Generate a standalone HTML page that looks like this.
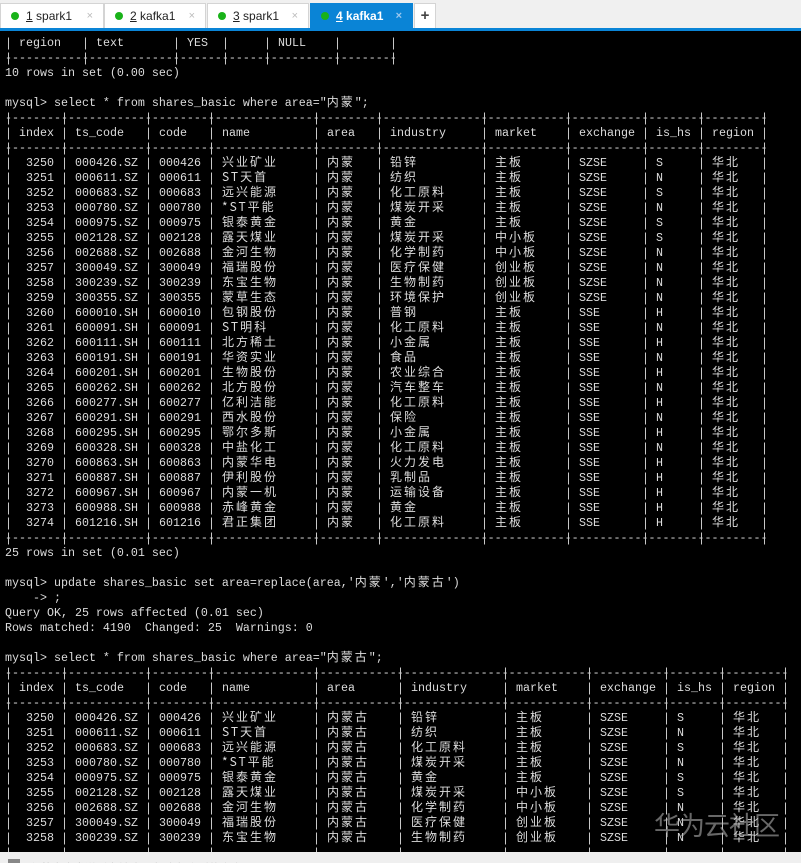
<!DOCTYPE html>
<html><head><meta charset="utf-8"><style>
*{margin:0;padding:0;box-sizing:border-box}
html,body{width:801px;height:863px;overflow:hidden}
body{background:#000;position:relative;font-family:"Liberation Mono","Noto Sans CJK SC",monospace;font-size:11.67px;color:#dcdcdc}
#tabs{position:absolute;left:0;top:0;width:801px;height:31px;background:#f0f0f0;border-bottom:3px solid #0a84d6}
.tab{position:absolute;top:3px;height:25px;background:#fff;border:1px solid #d4d4d4;border-bottom:none;font-family:"Liberation Sans",sans-serif;font-size:12px;color:#222;line-height:24px}
.tab .d{position:absolute;left:10px;top:8px;width:8px;height:8px;border-radius:50%;background:#19b219}
.tab .n{position:absolute;left:25px;top:0}
.tab .n u{text-decoration:underline}
.tab .x{position:absolute;right:10px;top:0;color:#bbb;font-size:11px}
.tab.a{background:#0a84d6;border-color:#0a84d6;color:#fff;font-weight:bold}
.tab.a .x{color:#9cc8ee}
#plus{position:absolute;left:414px;top:3px;width:22px;height:25px;background:#fff;border:1px solid #d4d4d4;border-bottom:none;text-align:center;font:bold 15px/23px "Liberation Sans",sans-serif;color:#444}
#term{position:absolute;left:0;top:35.5px;width:801px}
.l{height:15px;line-height:15px;position:relative;white-space:pre;padding-left:5px}
.l span{position:absolute;top:0}
i.z{font-family:"Noto Sans CJK SC",sans-serif;font-size:12px;letter-spacing:2px;font-style:normal;line-height:12px}
.l span.z{font-family:"Noto Sans CJK SC",sans-serif;font-size:12px;letter-spacing:2px;top:-2px}
.r .a{left:26px}.r .b{left:75px}.r .c{left:159px}.r .d{left:222px}.r .e{left:327px}
.hd .a{left:19px}
.p1 .f{left:390px}.p1 .g{left:495px}.p1 .h{left:579px}.p1 .i{left:656px}.p1 .j{left:712px}
.p2 .f{left:411px}.p2 .g{left:516px}.p2 .h{left:600px}.p2 .i{left:677px}.p2 .j{left:733px}
.v{position:absolute;width:1px;background:repeating-linear-gradient(to bottom,transparent 0,transparent 1.5px,#c8c8c8 1.5px,#c8c8c8 13.5px,transparent 13.5px,transparent 15px)}
.t1 .v{top:110.5px;height:435px}
.t2 .v{top:665.5px;height:187px}
.t0 .v{top:35.5px;height:30px}
#bot{position:absolute;left:0;top:852px;width:801px;height:11px;background:#efefef;overflow:hidden}
#bot .s{position:absolute;left:8px;top:7px;width:12px;height:6px;background:#888}
#bot .t{position:absolute;left:30px;top:8px;font:11px "Liberation Sans","Noto Sans CJK SC",sans-serif;color:#999;white-space:nowrap}
#wm{position:absolute;left:654px;top:806px;font:26px "Noto Sans CJK SC",sans-serif;color:rgba(190,190,190,0.55);letter-spacing:-1px}
</style></head><body>
<div id="tabs">
<div class="tab" style="left:0;width:104px"><span class="d"></span><span class="n"><u>1</u> spark1</span><span class="x">×</span></div>
<div class="tab" style="left:104px;width:102px"><span class="d"></span><span class="n"><u>2</u> kafka1</span><span class="x">×</span></div>
<div class="tab" style="left:207px;width:102px"><span class="d"></span><span class="n"><u>3</u> spark1</span><span class="x">×</span></div>
<div class="tab a" style="left:310px;width:103px"><span class="d"></span><span class="n"><u>4</u> kafka1</span><span class="x">×</span></div>
<div id="plus">+</div>
</div>
<div id="term">
<div class="l"><span style="left:19px">region</span><span style="left:96px">text</span><span style="left:187px">YES</span><span style="left:278px">NULL</span></div>
<div class="l">--------------------------------------------------------</div>
<div class="l">10 rows in set (0.00 sec)</div>
<div class="l"> </div>
<div class="l">mysql&gt; select * from shares_basic where area="<i class="z">内蒙</i>";</div>
<div class="l">-------------------------------------------------------------------------------------------------------------</div>
<div class="l r p1 hd"><span class="a">index</span><span class="b">ts_code</span><span class="c">code</span><span class="d">name</span><span class="e">area</span><span class="f">industry</span><span class="g">market</span><span class="h">exchange</span><span class="i">is_hs</span><span class="j">region</span></div>
<div class="l">-------------------------------------------------------------------------------------------------------------</div>
<div class="l r p1"><span class="a">3250</span><span class="b">000426.SZ</span><span class="c">000426</span><span class="d z">兴业矿业</span><span class="e z">内蒙</span><span class="f z">铅锌</span><span class="g z">主板</span><span class="h">SZSE</span><span class="i">S</span><span class="j z">华北</span></div>
<div class="l r p1"><span class="a">3251</span><span class="b">000611.SZ</span><span class="c">000611</span><span class="d z">ST天首</span><span class="e z">内蒙</span><span class="f z">纺织</span><span class="g z">主板</span><span class="h">SZSE</span><span class="i">N</span><span class="j z">华北</span></div>
<div class="l r p1"><span class="a">3252</span><span class="b">000683.SZ</span><span class="c">000683</span><span class="d z">远兴能源</span><span class="e z">内蒙</span><span class="f z">化工原料</span><span class="g z">主板</span><span class="h">SZSE</span><span class="i">S</span><span class="j z">华北</span></div>
<div class="l r p1"><span class="a">3253</span><span class="b">000780.SZ</span><span class="c">000780</span><span class="d z">*ST平能</span><span class="e z">内蒙</span><span class="f z">煤炭开采</span><span class="g z">主板</span><span class="h">SZSE</span><span class="i">N</span><span class="j z">华北</span></div>
<div class="l r p1"><span class="a">3254</span><span class="b">000975.SZ</span><span class="c">000975</span><span class="d z">银泰黄金</span><span class="e z">内蒙</span><span class="f z">黄金</span><span class="g z">主板</span><span class="h">SZSE</span><span class="i">S</span><span class="j z">华北</span></div>
<div class="l r p1"><span class="a">3255</span><span class="b">002128.SZ</span><span class="c">002128</span><span class="d z">露天煤业</span><span class="e z">内蒙</span><span class="f z">煤炭开采</span><span class="g z">中小板</span><span class="h">SZSE</span><span class="i">S</span><span class="j z">华北</span></div>
<div class="l r p1"><span class="a">3256</span><span class="b">002688.SZ</span><span class="c">002688</span><span class="d z">金河生物</span><span class="e z">内蒙</span><span class="f z">化学制药</span><span class="g z">中小板</span><span class="h">SZSE</span><span class="i">N</span><span class="j z">华北</span></div>
<div class="l r p1"><span class="a">3257</span><span class="b">300049.SZ</span><span class="c">300049</span><span class="d z">福瑞股份</span><span class="e z">内蒙</span><span class="f z">医疗保健</span><span class="g z">创业板</span><span class="h">SZSE</span><span class="i">N</span><span class="j z">华北</span></div>
<div class="l r p1"><span class="a">3258</span><span class="b">300239.SZ</span><span class="c">300239</span><span class="d z">东宝生物</span><span class="e z">内蒙</span><span class="f z">生物制药</span><span class="g z">创业板</span><span class="h">SZSE</span><span class="i">N</span><span class="j z">华北</span></div>
<div class="l r p1"><span class="a">3259</span><span class="b">300355.SZ</span><span class="c">300355</span><span class="d z">蒙草生态</span><span class="e z">内蒙</span><span class="f z">环境保护</span><span class="g z">创业板</span><span class="h">SZSE</span><span class="i">N</span><span class="j z">华北</span></div>
<div class="l r p1"><span class="a">3260</span><span class="b">600010.SH</span><span class="c">600010</span><span class="d z">包钢股份</span><span class="e z">内蒙</span><span class="f z">普钢</span><span class="g z">主板</span><span class="h">SSE</span><span class="i">H</span><span class="j z">华北</span></div>
<div class="l r p1"><span class="a">3261</span><span class="b">600091.SH</span><span class="c">600091</span><span class="d z">ST明科</span><span class="e z">内蒙</span><span class="f z">化工原料</span><span class="g z">主板</span><span class="h">SSE</span><span class="i">N</span><span class="j z">华北</span></div>
<div class="l r p1"><span class="a">3262</span><span class="b">600111.SH</span><span class="c">600111</span><span class="d z">北方稀土</span><span class="e z">内蒙</span><span class="f z">小金属</span><span class="g z">主板</span><span class="h">SSE</span><span class="i">H</span><span class="j z">华北</span></div>
<div class="l r p1"><span class="a">3263</span><span class="b">600191.SH</span><span class="c">600191</span><span class="d z">华资实业</span><span class="e z">内蒙</span><span class="f z">食品</span><span class="g z">主板</span><span class="h">SSE</span><span class="i">N</span><span class="j z">华北</span></div>
<div class="l r p1"><span class="a">3264</span><span class="b">600201.SH</span><span class="c">600201</span><span class="d z">生物股份</span><span class="e z">内蒙</span><span class="f z">农业综合</span><span class="g z">主板</span><span class="h">SSE</span><span class="i">H</span><span class="j z">华北</span></div>
<div class="l r p1"><span class="a">3265</span><span class="b">600262.SH</span><span class="c">600262</span><span class="d z">北方股份</span><span class="e z">内蒙</span><span class="f z">汽车整车</span><span class="g z">主板</span><span class="h">SSE</span><span class="i">N</span><span class="j z">华北</span></div>
<div class="l r p1"><span class="a">3266</span><span class="b">600277.SH</span><span class="c">600277</span><span class="d z">亿利洁能</span><span class="e z">内蒙</span><span class="f z">化工原料</span><span class="g z">主板</span><span class="h">SSE</span><span class="i">H</span><span class="j z">华北</span></div>
<div class="l r p1"><span class="a">3267</span><span class="b">600291.SH</span><span class="c">600291</span><span class="d z">西水股份</span><span class="e z">内蒙</span><span class="f z">保险</span><span class="g z">主板</span><span class="h">SSE</span><span class="i">N</span><span class="j z">华北</span></div>
<div class="l r p1"><span class="a">3268</span><span class="b">600295.SH</span><span class="c">600295</span><span class="d z">鄂尔多斯</span><span class="e z">内蒙</span><span class="f z">小金属</span><span class="g z">主板</span><span class="h">SSE</span><span class="i">H</span><span class="j z">华北</span></div>
<div class="l r p1"><span class="a">3269</span><span class="b">600328.SH</span><span class="c">600328</span><span class="d z">中盐化工</span><span class="e z">内蒙</span><span class="f z">化工原料</span><span class="g z">主板</span><span class="h">SSE</span><span class="i">N</span><span class="j z">华北</span></div>
<div class="l r p1"><span class="a">3270</span><span class="b">600863.SH</span><span class="c">600863</span><span class="d z">内蒙华电</span><span class="e z">内蒙</span><span class="f z">火力发电</span><span class="g z">主板</span><span class="h">SSE</span><span class="i">H</span><span class="j z">华北</span></div>
<div class="l r p1"><span class="a">3271</span><span class="b">600887.SH</span><span class="c">600887</span><span class="d z">伊利股份</span><span class="e z">内蒙</span><span class="f z">乳制品</span><span class="g z">主板</span><span class="h">SSE</span><span class="i">H</span><span class="j z">华北</span></div>
<div class="l r p1"><span class="a">3272</span><span class="b">600967.SH</span><span class="c">600967</span><span class="d z">内蒙一机</span><span class="e z">内蒙</span><span class="f z">运输设备</span><span class="g z">主板</span><span class="h">SSE</span><span class="i">H</span><span class="j z">华北</span></div>
<div class="l r p1"><span class="a">3273</span><span class="b">600988.SH</span><span class="c">600988</span><span class="d z">赤峰黄金</span><span class="e z">内蒙</span><span class="f z">黄金</span><span class="g z">主板</span><span class="h">SSE</span><span class="i">H</span><span class="j z">华北</span></div>
<div class="l r p1"><span class="a">3274</span><span class="b">601216.SH</span><span class="c">601216</span><span class="d z">君正集团</span><span class="e z">内蒙</span><span class="f z">化工原料</span><span class="g z">主板</span><span class="h">SSE</span><span class="i">H</span><span class="j z">华北</span></div>
<div class="l">-------------------------------------------------------------------------------------------------------------</div>
<div class="l">25 rows in set (0.01 sec)</div>
<div class="l"> </div>
<div class="l">mysql&gt; update shares_basic set area=replace(area,'<i class="z">内蒙</i>','<i class="z">内蒙古</i>')</div>
<div class="l">    -&gt; ;</div>
<div class="l">Query OK, 25 rows affected (0.01 sec)</div>
<div class="l">Rows matched: 4190  Changed: 25  Warnings: 0</div>
<div class="l"> </div>
<div class="l">mysql&gt; select * from shares_basic where area="<i class="z">内蒙古</i>";</div>
<div class="l">----------------------------------------------------------------------------------------------------------------</div>
<div class="l r p2 hd"><span class="a">index</span><span class="b">ts_code</span><span class="c">code</span><span class="d">name</span><span class="e">area</span><span class="f">industry</span><span class="g">market</span><span class="h">exchange</span><span class="i">is_hs</span><span class="j">region</span></div>
<div class="l">----------------------------------------------------------------------------------------------------------------</div>
<div class="l r p2"><span class="a">3250</span><span class="b">000426.SZ</span><span class="c">000426</span><span class="d z">兴业矿业</span><span class="e z">内蒙古</span><span class="f z">铅锌</span><span class="g z">主板</span><span class="h">SZSE</span><span class="i">S</span><span class="j z">华北</span></div>
<div class="l r p2"><span class="a">3251</span><span class="b">000611.SZ</span><span class="c">000611</span><span class="d z">ST天首</span><span class="e z">内蒙古</span><span class="f z">纺织</span><span class="g z">主板</span><span class="h">SZSE</span><span class="i">N</span><span class="j z">华北</span></div>
<div class="l r p2"><span class="a">3252</span><span class="b">000683.SZ</span><span class="c">000683</span><span class="d z">远兴能源</span><span class="e z">内蒙古</span><span class="f z">化工原料</span><span class="g z">主板</span><span class="h">SZSE</span><span class="i">S</span><span class="j z">华北</span></div>
<div class="l r p2"><span class="a">3253</span><span class="b">000780.SZ</span><span class="c">000780</span><span class="d z">*ST平能</span><span class="e z">内蒙古</span><span class="f z">煤炭开采</span><span class="g z">主板</span><span class="h">SZSE</span><span class="i">N</span><span class="j z">华北</span></div>
<div class="l r p2"><span class="a">3254</span><span class="b">000975.SZ</span><span class="c">000975</span><span class="d z">银泰黄金</span><span class="e z">内蒙古</span><span class="f z">黄金</span><span class="g z">主板</span><span class="h">SZSE</span><span class="i">S</span><span class="j z">华北</span></div>
<div class="l r p2"><span class="a">3255</span><span class="b">002128.SZ</span><span class="c">002128</span><span class="d z">露天煤业</span><span class="e z">内蒙古</span><span class="f z">煤炭开采</span><span class="g z">中小板</span><span class="h">SZSE</span><span class="i">S</span><span class="j z">华北</span></div>
<div class="l r p2"><span class="a">3256</span><span class="b">002688.SZ</span><span class="c">002688</span><span class="d z">金河生物</span><span class="e z">内蒙古</span><span class="f z">化学制药</span><span class="g z">中小板</span><span class="h">SZSE</span><span class="i">N</span><span class="j z">华北</span></div>
<div class="l r p2"><span class="a">3257</span><span class="b">300049.SZ</span><span class="c">300049</span><span class="d z">福瑞股份</span><span class="e z">内蒙古</span><span class="f z">医疗保健</span><span class="g z">创业板</span><span class="h">SZSE</span><span class="i">N</span><span class="j z">华北</span></div>
<div class="l r p2"><span class="a">3258</span><span class="b">300239.SZ</span><span class="c">300239</span><span class="d z">东宝生物</span><span class="e z">内蒙古</span><span class="f z">生物制药</span><span class="g z">创业板</span><span class="h">SZSE</span><span class="i">N</span><span class="j z">华北</span></div>
</div>
<div class="t0"><div class="v" style="left:8px"></div><div class="v" style="left:85px"></div><div class="v" style="left:176px"></div><div class="v" style="left:225px"></div><div class="v" style="left:267px"></div><div class="v" style="left:337px"></div><div class="v" style="left:393px"></div></div>
<div class="t1"><div class="v" style="left:8px"></div><div class="v" style="left:64px"></div><div class="v" style="left:148px"></div><div class="v" style="left:211px"></div><div class="v" style="left:316px"></div><div class="v" style="left:379px"></div><div class="v" style="left:484px"></div><div class="v" style="left:568px"></div><div class="v" style="left:645px"></div><div class="v" style="left:701px"></div><div class="v" style="left:764px"></div></div>
<div class="t2"><div class="v" style="left:8px"></div><div class="v" style="left:64px"></div><div class="v" style="left:148px"></div><div class="v" style="left:211px"></div><div class="v" style="left:316px"></div><div class="v" style="left:400px"></div><div class="v" style="left:505px"></div><div class="v" style="left:589px"></div><div class="v" style="left:666px"></div><div class="v" style="left:722px"></div><div class="v" style="left:785px"></div></div>
<div id="wm">华为云社区</div>
<div id="bot"><div class="s"></div><div class="t">仅将文本发送到当前选项卡 全部会话的命令</div></div>
</body></html>
